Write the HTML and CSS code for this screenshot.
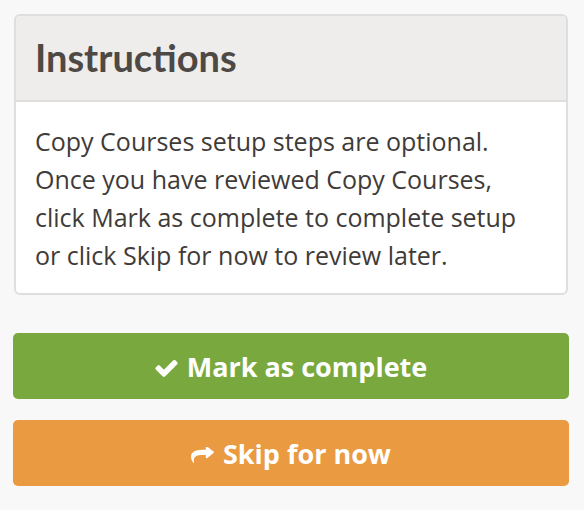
FILE: index.html
```html
<!DOCTYPE html>
<html lang="en">
<head>
<meta charset="utf-8">
<title>Instructions</title>
<link rel="stylesheet" href="styles.css">
</head>
<body>
<div class="page">
  <section class="card">
    <header class="card-header">
      <h2 class="card-title">Instructions</h2>
    </header>
    <div class="card-body">
      <p>Copy Courses setup steps are optional. Once you have reviewed Copy Courses, click Mark as complete to complete setup or click Skip for now to review later.</p>
    </div>
  </section>
  <div class="actions">
    <button class="btn btn-complete" type="button">
      <svg class="icon icon-check" viewBox="121 270 1550 1252" aria-hidden="true"><path fill="currentColor" d="M1671 566q0 40-28 68l-724 724-136 136q-28 28-68 28t-68-28l-136-136-362-362q-28-28-28-68t28-68l136-136q28-28 68-28t68 28l294 295 656-657q28-28 68-28t68 28l136 136q28 28 28 68z"/></svg>
      <span>Mark as complete</span>
    </button>
    <button class="btn btn-skip" type="button">
      <svg class="icon icon-share" viewBox="0 128 1792 1536" preserveAspectRatio="none" aria-hidden="true"><path fill="currentColor" d="M1792 640q0 26-19 45l-512 512q-19 19-45 19t-45-19-19-45v-256h-224q-98 0-175.5 6t-154 21.5-133 42.5-105.5 69.5-80 101-48.5 138.5-17.5 181q0 55 5 123 0 6 2.5 23.5t2.5 26.5q0 15-8.5 25t-23.5 10q-16 0-28-17-7-9-13-22t-13.5-30-10.5-24q-127-285-127-451 0-199 53-333 162-403 875-403h224v-256q0-26 19-45t45-19 45 19l512 512q19 19 19 45z"/></svg>
      <span>Skip for now</span>
    </button>
  </div>
</div>
</body>
</html>
```

FILE: styles.css
```css
* {
  box-sizing: border-box;
}

html, body {
  margin: 0;
  padding: 0;
  background: #f8f8f8;
}

body {
  font-family: "Open Sans", Lato, "Liberation Sans", sans-serif;
}

.page {
  padding: 14px 15px 0 13px;
}

.card {
  margin: 0 1px;
  background: #ffffff;
  border: 2px solid #dedede;
  border-radius: 6px;
  overflow: hidden;
}

.card-header {
  background: #eeedeb;
  border-bottom: 2px solid #dedede;
  padding: 18px 19px 20px;
}

.card-title {
  margin: 0;
  font-family: Lato, "Open Sans", sans-serif;
  font-size: 38px;
  line-height: 46px;
  font-weight: 700;
  color: #4e4945;
}

.card-body {
  padding: 20px 19px 19px 19px;
}

.card-body p {
  margin: 0;
  font-size: 25px;
  line-height: 38px;
  color: #3f3b38;
}

.actions {
  margin-top: 38px;
  display: flex;
  flex-direction: column;
  gap: 21px;
}

.btn {
  height: 66px;
  width: 100%;
  border: 0;
  border-radius: 5px;
  display: flex;
  align-items: center;
  justify-content: center;
  gap: 9px;
  font-family: "Open Sans", Lato, sans-serif;
  font-size: 27px;
  font-weight: 700;
  color: #ffffff;
  cursor: pointer;
  padding: 0;
}

.btn-complete {
  background: #79a93e;
}

.btn-skip {
  background: #ea9a40;
}

.icon {
  display: block;
  flex: none;
}

.icon-check {
  width: 23px;
  height: 18px;
  margin-top: 3px;
}

.icon-share {
  width: 23px;
  height: 16px;
  margin-top: 3px;
}
```
